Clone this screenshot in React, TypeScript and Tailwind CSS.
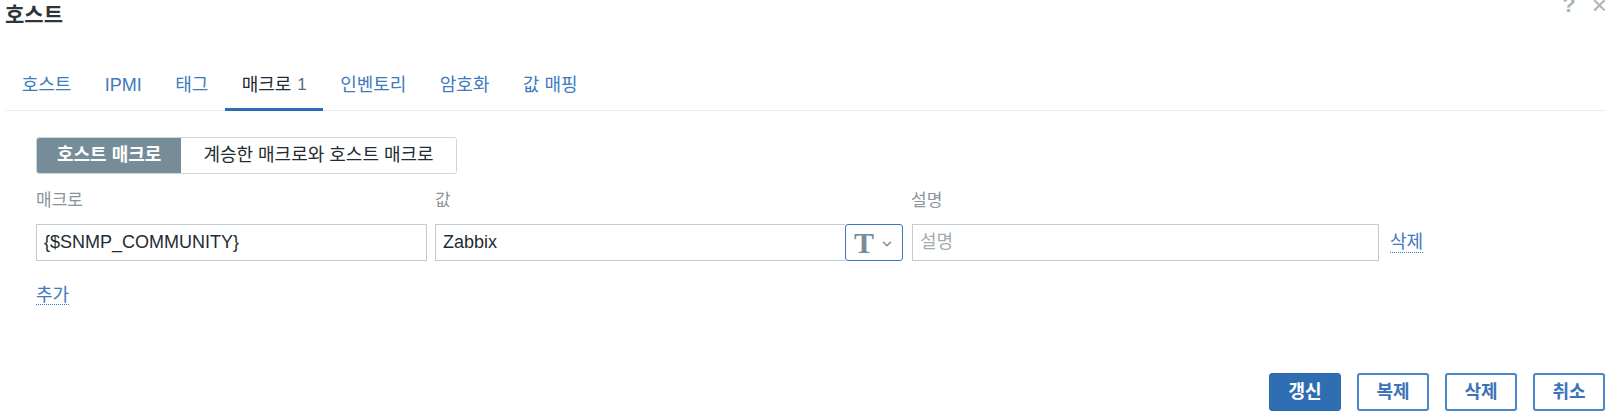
import { ChevronDown } from "lucide-react";

const TABS = [
  { label: "호스트" },
  { label: "IPMI" },
  { label: "태그" },
  { label: "매크로", count: 1, active: true },
  { label: "인벤토리" },
  { label: "암호화" },
  { label: "값 매핑" },
];

const FONT = "[font-family:'Liberation_Sans','Noto_Sans_CJK_KR',sans-serif]";

export default function App() {
  return (
    <div className={`relative h-[419px] w-[1611px] overflow-hidden bg-white ${FONT} text-[18px] text-[#1f2c33]`}>
      {/* header icons, cut off at the top */}
      <div className="absolute -top-[12px] right-[4px] flex items-center gap-[16px] text-[22px] text-[#a9b3b9]">
        <span className="font-bold">?</span>
        <span className="text-[26px] leading-none">×</span>
      </div>

      <h1 className="px-[5px] pt-[1px] text-[21px] font-bold leading-[28px] text-[#2d3538]">호스트</h1>

      <nav className="mx-[5px] mt-[33px] flex border-b border-[#ebeef0]">
        {TABS.map((tab) => (
          <div
            key={tab.label}
            className={
              "-mb-px flex h-[49px] items-center border-b-[3px] px-[16.7px] " +
              (tab.active ? "border-[#2b6cb0] text-[#1f2c33]" : "border-transparent text-[#3d7bbd]")
            }
          >
            {tab.label}
            {tab.count !== undefined && <span className="ml-[6px] text-[17px] text-[#5f6c74]">{tab.count}</span>}
          </div>
        ))}
      </nav>

      <div className="px-[36px] pt-[26px]">
        <div className="flex h-[37px] w-fit overflow-hidden rounded-[3px] border border-[#cfd5d9]">
          <div className="flex items-center bg-[#768d99] px-[20px] font-bold text-white">호스트 매크로</div>
          <div className="flex items-center bg-white px-[22px] text-[#1f2c33]">계승한 매크로와 호스트 매크로</div>
        </div>

        <div className="mt-[17px] flex text-[17px] leading-[20px] text-[#8a9399]">
          <div className="w-[399px]">매크로</div>
          <div className="w-[476px]">값</div>
          <div>설명</div>
        </div>

        <div className="mt-[13px] flex items-center">
          <div className="flex h-[37px] w-[391px] items-center border border-[#c3ccd1] px-[7px]">{"{$SNMP_COMMUNITY}"}</div>
          <div className="ml-[8px] flex h-[37px] w-[410px] items-center border border-r-0 border-[#c3ccd1] px-[7px]">Zabbix</div>
          <div className="flex h-[37px] w-[58px] items-center justify-center gap-[6px] rounded-[3px] border border-[#3b78bf]">
            <span className="[font-family:'Liberation_Serif',serif] text-[30px] font-bold leading-none text-[#768d99]">T</span>
            <ChevronDown size={14} strokeWidth={2.5} className="mt-[3px] text-[#768d99]" />
          </div>
          <div className="ml-[9px] flex h-[37px] w-[467px] items-center border border-[#c3ccd1] px-[7px] text-[#a3abb0]">설명</div>
          <a className="ml-[11px] border-b border-dotted border-[#3d7bbd] leading-[20px] text-[#3d7bbd]">삭제</a>
        </div>

        <a className="mt-[25px] inline-block border-b border-dotted border-[#3d7bbd] leading-[18px] text-[#3d7bbd]">추가</a>
      </div>

      <div className="absolute bottom-[8px] right-[6px] flex gap-[16px]">
        <button className="h-[38px] w-[72px] rounded-[3px] border border-[#2b6cb0] bg-[#2f6eb3] font-bold text-white">갱신</button>
        {["복제", "삭제", "취소"].map((b) => (
          <button key={b} className="h-[38px] w-[72px] rounded-[3px] border-2 border-[#4a86cc] bg-white font-bold text-[#3a74b8]">
            {b}
          </button>
        ))}
      </div>
    </div>
  );
}
